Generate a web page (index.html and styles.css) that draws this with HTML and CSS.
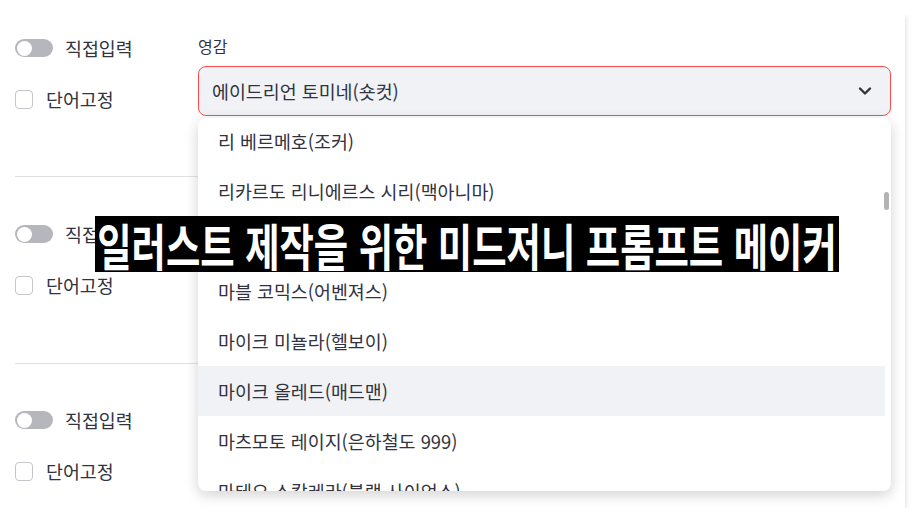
FILE: index.html
```html
<!DOCTYPE html>
<html lang="ko">
<head>
<meta charset="UTF-8">
<title>미드저니 프롬프트 메이커</title>
<link rel="stylesheet" href="styles.css">
</head>
<body>
	<div class="card">
		<section class="row row-first">
			<div class="side">
				<label class="toggle-line"><span class="toggle"><span class="knob"></span></span>직접입력</label>
				<label class="check-line"><span class="box"></span>단어고정</label>
			</div>
			<div class="main">
				<div class="field-label">영감</div>
				<div class="select-wrap">
					<div class="select">
						<span>에이드리언 토미네(숏컷)</span>
						<svg class="chevron" width="14" height="10" viewBox="0 0 14 10"><path d="M2 2.5 L7 7.5 L12 2.5" fill="none" stroke="#31333f" stroke-width="2.4" stroke-linecap="round" stroke-linejoin="round"/></svg>
					</div>
					<div class="dropdown">
						<ul class="options">
							<li>리 베르메호(조커)</li>
							<li>리카르도 리니에르스 시리(맥아니마)</li>
							<li>리히텐슈타인(팝아트)</li>
							<li>마블 코믹스(어벤져스)</li>
							<li>마이크 미뇰라(헬보이)</li>
							<li class="active">마이크 올레드(매드맨)</li>
							<li>마츠모토 레이지(은하철도 999)</li>
							<li>마테오 스칼레라(블랙 사이언스)</li>
						</ul>
						<div class="thumb"></div>
					</div>
				</div>
			</div>
		</section>
		<hr class="divider">
		<section class="row row-mid">
			<div class="side">
				<label class="toggle-line"><span class="toggle"><span class="knob"></span></span>직접입력</label>
				<label class="check-line"><span class="box"></span>단어고정</label>
			</div>
			<div class="main"></div>
		</section>
		<hr class="divider">
		<section class="row row-last">
			<div class="side">
				<label class="toggle-line"><span class="toggle"><span class="knob"></span></span>직접입력</label>
				<label class="check-line"><span class="box"></span>단어고정</label>
			</div>
			<div class="main"></div>
		</section>
	</div>

	<div class="caption">일러스트 제작을 위한 미드저니 프롬프트 메이커</div>
</body>
</html>
```

FILE: styles.css
```css
html{
	height:100%;
}

body{
	margin:15px 0 0 14px;
	background:#fff;
	font-family:"Noto Sans CJK KR", "Noto Sans", sans-serif;
	color:#31333f;
}

.card{
	width:876px;
	height:493px;
	padding:0 14px 0 1px;
	background:#fff;
	box-shadow:0 1px 5px rgba(0,0,0,0.18);
	display:flex;
	flex-direction:column;
}

.row{
	display:grid;
	grid-template-columns:183px 1fr;
}
.row-first{ height:161px; }
.row-mid{ height:186px; }
.row-last{ flex:1; }

.row-first .side{ padding-top:21px; }
.row-mid .side{ padding-top:45px; }
.row-last .side{ padding-top:44px; }

.divider{
	border:0;
	height:1px;
	margin:0;
	background:#e2e2e4;
}

.side{
	display:flex;
	flex-direction:column;
	gap:27px;
}

.toggle-line, .check-line{
	display:flex;
	align-items:center;
	height:24px;
	font-size:18.4px;
}
.toggle-line{ gap:12px; }
.check-line{ gap:13px; }

.toggle{
	width:38px;
	height:18px;
	border-radius:9px;
	background:#b5b7bd;
	display:flex;
	align-items:center;
	padding:0 2px;
	box-sizing:border-box;
}
.knob{
	width:15px;
	height:15px;
	border-radius:50%;
	background:#fff;
}

.box{
	width:18px;
	height:19px;
	box-sizing:border-box;
	border:1px solid #c4c6cc;
	border-radius:4px;
	background:#fff;
}

.main{
	padding-top:21px;
}
.field-label{
	font-size:16px;
	line-height:20px;
	margin-bottom:10px;
}

.select-wrap{
	position:relative;
}
.select{
	height:50px;
	box-sizing:border-box;
	border:1px solid #ff4b4b;
	border-radius:8px;
	background:#f0f2f6;
	display:flex;
	align-items:center;
	justify-content:space-between;
	padding:0 18px 0 13px;
	font-size:18.4px;
}

.dropdown{
	position:absolute;
	top:52px;
	left:0;
	right:0;
	height:373px;
	background:#fff;
	border-radius:8px;
	box-shadow:0 4px 14px rgba(0,0,0,0.18);
	overflow:hidden;
	z-index:5;
}
.options{
	list-style:none;
	margin:-2px 0 0 0;
	padding:0 6px 0 0;
}
.options li{
	height:50px;
	line-height:50px;
	padding-left:20px;
	font-size:18.4px;
	white-space:nowrap;
}
.options li.active{
	background:#f0f2f6;
}
.thumb{
	position:absolute;
	right:2px;
	top:74px;
	width:5px;
	height:18px;
	border-radius:3px;
	background:#b3b3b6;
}

.caption{
	position:absolute;
	left:95px;
	top:216px;
	height:56px;
	line-height:56px;
	padding:0 3px;
	background:#000;
	color:#fff;
	font-weight:bold;
	font-size:50px;
	white-space:nowrap;
	transform:scaleX(0.747);
	transform-origin:left top;
	z-index:10;
}
```
